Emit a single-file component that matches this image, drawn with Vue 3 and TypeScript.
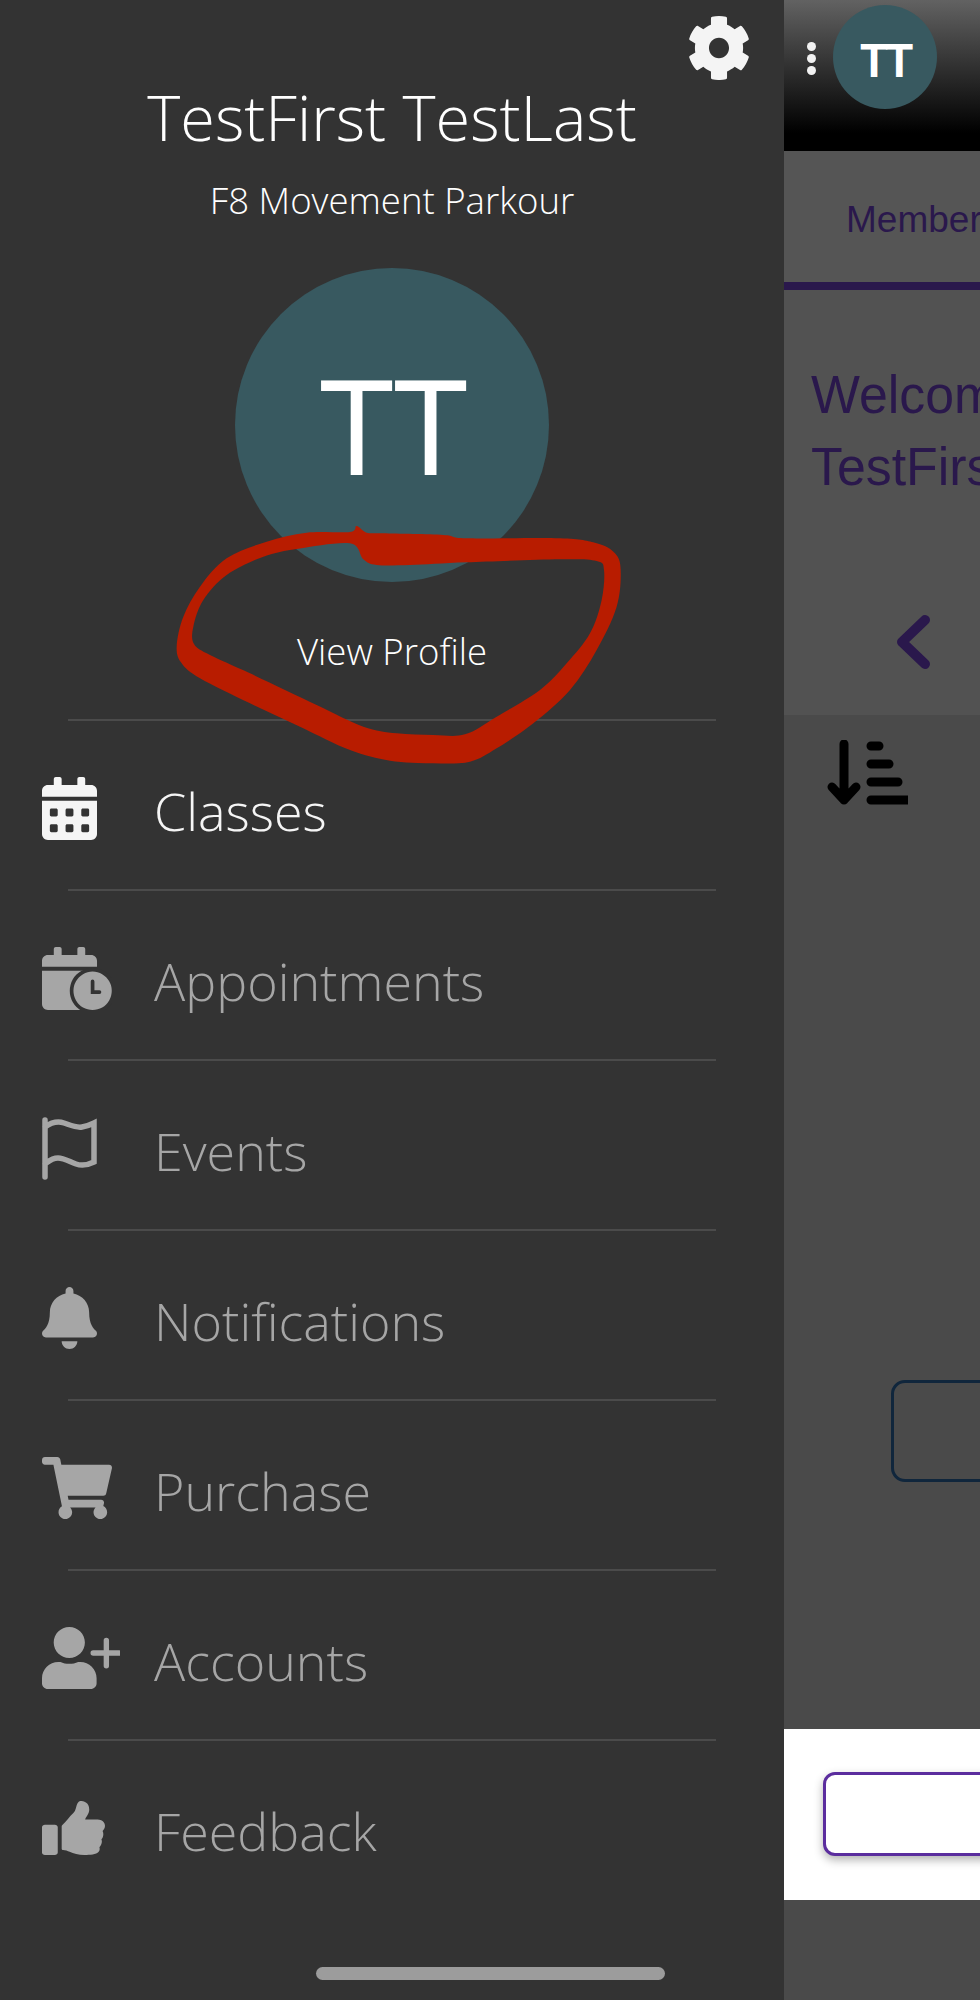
<script setup lang="ts">
type Part = { d: string; fill?: string; stroke?: string; sw?: number };
type Item = { label: string; active?: boolean; vb: string; w: number; h: number; parts: Part[] };

const bg = "#333333";

const calTop =
  "M400 64h-48V16c0-8.8-7.2-16-16-16h-32c-8.8 0-16 7.2-16 16v48H160V16c0-8.8-7.2-16-16-16h-32c-8.8 0-16 7.2-16 16v48H48C21.5 64 0 85.5 0 112v48h448v-48c0-26.5-21.5-48-48-48z";

const items: Item[] = [
  {
    label: "Classes",
    active: true,
    vb: "0 0 448 512",
    w: 55,
    h: 63,
    parts: [
      {
        d:
          calTop +
          "M0 464c0 26.5 21.5 48 48 48h352c26.5 0 48-21.5 48-48V192H0v272zm320-196c0-6.6 5.4-12 12-12h40c6.6 0 12 5.4 12 12v40c0 6.6-5.4 12-12 12h-40c-6.6 0-12-5.4-12-12v-40zm0 128c0-6.6 5.4-12 12-12h40c6.6 0 12 5.4 12 12v40c0 6.6-5.4 12-12 12h-40c-6.6 0-12-5.4-12-12v-40zM192 268c0-6.6 5.4-12 12-12h40c6.6 0 12 5.4 12 12v40c0 6.6-5.4 12-12 12h-40c-6.6 0-12-5.4-12-12v-40zm0 128c0-6.6 5.4-12 12-12h40c6.6 0 12 5.4 12 12v40c0 6.6-5.4 12-12 12h-40c-6.6 0-12-5.4-12-12v-40zM64 268c0-6.6 5.4-12 12-12h40c6.6 0 12 5.4 12 12v40c0 6.6-5.4 12-12 12H76c-6.6 0-12-5.4-12-12v-40zm0 128c0-6.6 5.4-12 12-12h40c6.6 0 12 5.4 12 12v40c0 6.6-5.4 12-12 12H76c-6.6 0-12-5.4-12-12v-40z",
      },
    ],
  },
  {
    label: "Appointments",
    vb: "0 0 570 512",
    w: 70,
    h: 63,
    parts: [
      { d: calTop + "M0 192h448v272c0 26.5-21.5 48-48 48H48c-26.5 0-48-21.5-48-48z" },
      { d: "M412 170a186 186 0 1 0 .1 0z", fill: bg },
      { d: "M412 200a156 156 0 1 0 .1 0z" },
      { d: "M412 280v86h56", fill: "none", stroke: bg, sw: 30 },
    ],
  },
  {
    label: "Events",
    vb: "0 0 55 63",
    w: 55,
    h: 63,
    parts: [
      {
        d: "M3 3V60M3 10C10 5 16 4 22 6S34 11 40 10 48 8 52 6V45C46 48 40 49 34 47S22 41 16 41 7 44 3 47",
        fill: "none",
        stroke: "#a6a6a6",
        sw: 5.5,
      },
    ],
  },
  {
    label: "Notifications",
    vb: "0 0 448 512",
    w: 55,
    h: 62,
    parts: [
      {
        d: "M224 512c35.32 0 63.97-28.65 63.97-64H160.03c0 35.35 28.65 64 63.97 64zm215.39-149.71c-19.32-20.76-55.47-51.99-55.47-154.29 0-77.7-54.48-139.9-127.94-155.16V32c0-17.67-14.32-32-31.98-32s-31.98 14.33-31.98 32v20.84C118.56 68.1 64.08 130.3 64.08 208c0 102.3-36.15 133.53-55.47 154.29-6 6.45-8.66 14.16-8.61 21.71.11 16.4 12.98 32 32.1 32h383.8c19.12 0 32-15.6 32.1-32 .05-7.55-2.61-15.27-8.61-21.71z",
      },
    ],
  },
  {
    label: "Purchase",
    vb: "0 0 576 512",
    w: 70,
    h: 62,
    parts: [
      {
        d: "M528.12 301.319l47.273-208C578.806 78.301 567.391 64 551.99 64H159.208l-9.166-44.81C147.758 8.021 137.93 0 126.529 0H24C10.745 0 0 10.745 0 24v16c0 13.255 10.745 24 24 24h69.883l70.248 343.435C147.325 417.1 136 435.222 136 456c0 30.928 25.072 56 56 56s56-25.072 56-56c0-15.674-6.447-29.835-16.824-40h209.647C430.447 426.165 424 440.326 424 456c0 30.928 25.072 56 56 56s56-25.072 56-56c0-22.172-12.888-41.332-31.579-50.405l5.517-24.276c3.413-15.018-8.002-29.319-23.403-29.319H218.117l-6.545-32h293.145c11.206 0 20.92-7.754 23.403-18.681z",
      },
    ],
  },
  {
    label: "Accounts",
    vb: "0 0 640 512",
    w: 78,
    h: 62,
    parts: [
      {
        d: "M224 256c70.7 0 128-57.3 128-128S294.7 0 224 0 96 57.3 96 128s57.3 128 128 128zm89.6 32h-16.7c-22.2 10.2-46.9 16-72.9 16s-50.6-5.8-72.9-16h-16.7C60.2 288 0 348.2 0 422.4V464c0 26.5 21.5 48 48 48h352c26.5 0 48-21.5 48-48v-41.6c0-74.2-60.2-134.4-134.4-134.4z",
      },
      { d: "M528 110V320M420 215H636", fill: "none", stroke: "#a6a6a6", sw: 44 },
    ],
  },
  {
    label: "Feedback",
    vb: "0 0 512 512",
    w: 63,
    h: 54,
    parts: [
      {
        d: "M104 224H24c-13.255 0-24 10.745-24 24v240c0 13.255 10.745 24 24 24h80c13.255 0 24-10.745 24-24V248c0-13.255-10.745-24-24-24zM384 81.452c0 42.416-25.97 66.208-33.277 94.548h101.723c33.397 0 59.397 27.746 59.553 58.098.084 17.938-7.546 37.249-19.439 49.197l-.11.11c9.836 23.337 8.237 56.037-9.308 79.469 8.681 25.895-.069 57.704-16.382 74.757 4.298 17.598 2.244 32.575-6.148 44.632C440.202 511.587 389.616 512 346.839 512l-2.845-.001c-48.287-.017-87.806-17.598-119.56-31.725-15.957-7.099-36.821-15.887-52.651-16.178-6.54-.12-11.783-5.457-11.783-11.998v-213.77c0-3.2 1.282-6.271 3.558-8.521 39.614-39.144 56.648-80.587 89.117-113.111 14.804-14.832 20.188-37.236 25.393-58.902C282.515 39.293 291.817 0 312 0c24 0 72 8 72 81.452z",
      },
    ],
  },
];

const gear =
  "M487.4 315.7l-42.6-24.6c4.3-23.2 4.3-47 0-70.2l42.6-24.6c4.9-2.8 7.1-8.6 5.5-14-11.1-35.6-30-67.8-54.7-94.6-3.8-4.1-10-5.1-14.8-2.3L380.8 110c-17.9-15.4-38.5-27.3-60.8-35.1V25.8c0-5.6-3.9-10.5-9.4-11.7-36.7-8.2-74.3-7.8-109.2 0-5.5 1.2-9.4 6.1-9.4 11.7V75c-22.2 7.9-42.8 19.8-60.8 35.1L88.7 85.5c-4.9-2.8-11-1.9-14.8 2.3-24.7 26.7-43.6 58.9-54.7 94.6-1.7 5.4.6 11.2 5.5 14L67.3 221c-4.3 23.2-4.3 47 0 70.2l-42.6 24.6c-4.9 2.8-7.1 8.6-5.5 14 11.1 35.6 30 67.8 54.7 94.6 3.8 4.1 10 5.1 14.8 2.3l42.6-24.6c17.9 15.4 38.5 27.3 60.8 35.1v49.2c0 5.6 3.9 10.5 9.4 11.7 36.7 8.2 74.3 7.8 109.2 0 5.5-1.2 9.4-6.1 9.4-11.7v-49.2c22.2-7.9 42.8-19.8 60.8-35.1l42.6 24.6c4.9 2.8 11 1.9 14.8-2.3 24.7-26.7 43.6-58.9 54.7-94.6 1.5-5.5-.7-11.3-5.6-14.1zM256 336c-44.1 0-80-35.9-80-80s35.9-80 80-80 80 35.9 80 80-35.9 80-80 80z";

// closed catmull-rom through hand-picked points, for the red pen scribble
const smooth = (p: number[][]) => {
  const n = p.length;
  let d = `M${p[0][0]} ${p[0][1]}`;
  for (let i = 0; i < n; i++) {
    const a = p[(i - 1 + n) % n];
    const b = p[i];
    const c = p[(i + 1) % n];
    const e = p[(i + 2) % n];
    const c1 = [b[0] + (c[0] - a[0]) / 6, b[1] + (c[1] - a[1]) / 6];
    const c2 = [c[0] - (e[0] - b[0]) / 6, c[1] - (e[1] - b[1]) / 6];
    d += `C${c1[0]} ${c1[1]} ${c2[0]} ${c2[1]} ${c[0]} ${c[1]}`;
  }
  return d + "Z";
};

const outer = [
  [600, 96], [470, 98], [350, 125], [230, 175], [150, 260], [100, 350], [80, 440], [95, 490],
  [150, 535], [300, 610], [450, 680], [600, 750], [720, 782], [850, 790], [960, 785], [1040, 745],
  [1150, 670], [1260, 570], [1340, 450], [1400, 320], [1412, 210], [1395, 160], [1340, 130],
  [1230, 115], [950, 115], [880, 105], [700, 100], [650, 98], [620, 78],
];
const inner = [
  [132, 432], [130, 380], [160, 300], [230, 225], [340, 170], [445, 146], [600, 130], [640, 178],
  [680, 195], [780, 195], [950, 187], [1230, 178], [1340, 183], [1362, 210], [1355, 300], [1320, 400],
  [1250, 490], [1170, 570], [1040, 650], [945, 703], [850, 705], [740, 700], [640, 680], [500, 615],
  [300, 520], [180, 465],
];
const scribble = smooth(outer) + smooth(inner);
</script>

<template>
  <div class="screen">
    <aside class="drawer">
      <svg class="gear" viewBox="17 8 478 496" preserveAspectRatio="none" width="60" height="64">
        <path :d="gear" fill="#f4f4f4" />
      </svg>
      <div class="profile">
        <h1>TestFirst TestLast</h1>
        <p class="gym">F8 Movement Parkour</p>
        <div class="avatar"><span>TT</span></div>
        <p class="view">View Profile</p>
      </div>
      <nav>
        <div v-for="item in items" :key="item.label" class="row" :class="{ active: item.active }">
          <div class="slot">
            <svg :viewBox="item.vb" :width="item.w" :height="item.h" preserveAspectRatio="none">
              <path
                v-for="(part, i) in item.parts"
                :key="i"
                :d="part.d"
                :fill="part.fill ?? 'currentColor'"
                :stroke="part.stroke"
                :stroke-width="part.sw"
                stroke-linecap="round"
              />
            </svg>
          </div>
          <span>{{ item.label }}</span>
        </div>
      </nav>
      <svg class="pen" viewBox="0 0 1500 840" width="500" height="280">
        <path :d="scribble" fill="#b81c00" fill-rule="evenodd" />
      </svg>
    </aside>

    <main class="page">
      <header class="bar">
        <div class="dots"><i></i><i></i><i></i></div>
        <div class="mini"><span>TT</span></div>
      </header>
      <div class="tabs"><span>Members</span></div>
      <section class="welcome">
        <h2>Welcome,<br />TestFirst TestLast</h2>
        <svg class="chev" viewBox="0 0 33 54" width="33" height="54">
          <path d="M28 5L5 27L28 49" fill="none" stroke="#2a184c" stroke-width="10" stroke-linecap="round" stroke-linejoin="round" />
        </svg>
      </section>
      <section class="list">
        <svg viewBox="0 0 81 65" width="81" height="65">
          <g fill="none" stroke="#000" stroke-width="9" stroke-linecap="round" stroke-linejoin="round">
            <path d="M17 4V60M5 47L17 60L29 47" />
            <path d="M44 6H52M44 24H62M44 42H71M44 60H80" />
          </g>
        </svg>
        <div class="card"></div>
      </section>
      <div class="band"><div class="btn"></div></div>
      <div class="rest"></div>
    </main>

    <div class="home"></div>
  </div>
</template>

<style scoped>
.screen {
  position: relative;
  display: flex;
  width: 980px;
  height: 2000px;
  overflow: hidden;
  font-family: "Open Sans", sans-serif;
}
.drawer {
  position: relative;
  width: 784px;
  flex-shrink: 0;
  background: #333333;
  color: #fff;
}
.gear {
  position: absolute;
  left: 689px;
  top: 16px;
}
.pen {
  position: absolute;
  left: 150px;
  top: 500px;
}
.profile {
  display: flex;
  flex-direction: column;
  align-items: center;
  height: 719px;
  padding-top: 75px;
  box-sizing: border-box;
  font-weight: 300;
}
h1 {
  margin: 0;
  font-size: 63px;
  font-weight: 300;
  line-height: 84px;
}
.gym {
  margin: 16px 0 0;
  font-size: 36.6px;
  line-height: 50px;
}
.avatar {
  width: 314px;
  height: 314px;
  margin-top: 43px;
  border-radius: 50%;
  background: #385960;
  display: flex;
  align-items: center;
  justify-content: center;
  padding-top: 4px;
  box-sizing: border-box;
  font-family: "Liberation Sans", sans-serif;
  font-size: 138px;
}
.avatar span {
  letter-spacing: -3px;
  transform: scaleX(0.91);
}
.view {
  margin: 44px 0 0;
  font-size: 36.6px;
  line-height: 50px;
}
.row {
  display: flex;
  align-items: center;
  height: 170px;
  box-sizing: border-box;
  padding: 8px 0 0 42px;
  position: relative;
  color: #a6a6a6;
  font-size: 52px;
  font-weight: 300;
}
.row > span {
  margin-top: 4px;
}
.row::before {
  content: "";
  position: absolute;
  top: 0;
  left: 68px;
  right: 68px;
  height: 2px;
  background: #4b4b4b;
}
.row.active {
  color: #f5f5f5;
}
.slot {
  width: 112px;
  display: flex;
}
.page {
  flex: 1;
  min-width: 0;
  display: flex;
  flex-direction: column;
  background: #4a4a4a;
}
.bar {
  height: 151px;
  flex-shrink: 0;
  background: linear-gradient(#626262, #000 88%);
  display: flex;
  align-items: flex-start;
  padding: 5px 0 0 23px;
  box-sizing: border-box;
  gap: 17px;
}
.dots {
  display: flex;
  flex-direction: column;
  gap: 3px;
  padding-top: 37px;
}
.dots i {
  display: block;
  width: 9px;
  height: 9px;
  border-radius: 50%;
  background: #f2f2f2;
}
.mini {
  width: 104px;
  height: 104px;
  padding-top: 5px;
  box-sizing: border-box;
  border-radius: 50%;
  background: #385960;
  color: #fff;
  display: flex;
  align-items: center;
  justify-content: center;
  font-family: "Liberation Sans", sans-serif;
  font-weight: 700;
  font-size: 49px;
}
.mini span {
  letter-spacing: -2.5px;
  transform: scaleX(0.92);
}
.tabs {
  height: 139px;
  box-sizing: border-box;
  flex-shrink: 0;
  border-bottom: 8px solid #2a184c;
  background: #555555;
  padding: 48px 0 0 62px;
  font-family: "Liberation Sans", sans-serif;
  font-size: 37px;
  line-height: 42px;
  color: #2a184c;
  white-space: nowrap;
}
.welcome {
  height: 425px;
  flex-shrink: 0;
  background: #525252;
  padding: 68px 0 0 27px;
  box-sizing: border-box;
  color: #2a184c;
  font-family: "Liberation Sans", sans-serif;
  white-space: nowrap;
}
h2 {
  margin: 0;
  font-size: 54px;
  font-weight: 400;
  line-height: 72px;
  transform: scaleX(0.96);
  transform-origin: left;
}
.chev {
  display: block;
  margin: 113px 0 0 86px;
}
.list {
  height: 1014px;
  flex-shrink: 0;
  padding: 25px 0 0 43px;
  box-sizing: border-box;
}
.list svg {
  display: block;
}
.card {
  width: 200px;
  height: 102px;
  margin: 575px 0 0 64px;
  border: 3px solid #10263c;
  border-radius: 14px;
  box-sizing: border-box;
}
.band {
  height: 171px;
  flex-shrink: 0;
  background: #fff;
  padding: 43px 0 0 39px;
  box-sizing: border-box;
}
.btn {
  width: 300px;
  height: 84px;
  border: 3px solid #5b2d9e;
  border-radius: 12px;
  box-sizing: border-box;
  background: #fff;
  box-shadow: 0 4px 10px rgba(0, 0, 0, 0.3);
}
.rest {
  flex: 1;
}
.home {
  position: absolute;
  left: 316px;
  top: 1967px;
  width: 349px;
  height: 13px;
  border-radius: 7px;
  background: #9c9c9c;
}
</style>
